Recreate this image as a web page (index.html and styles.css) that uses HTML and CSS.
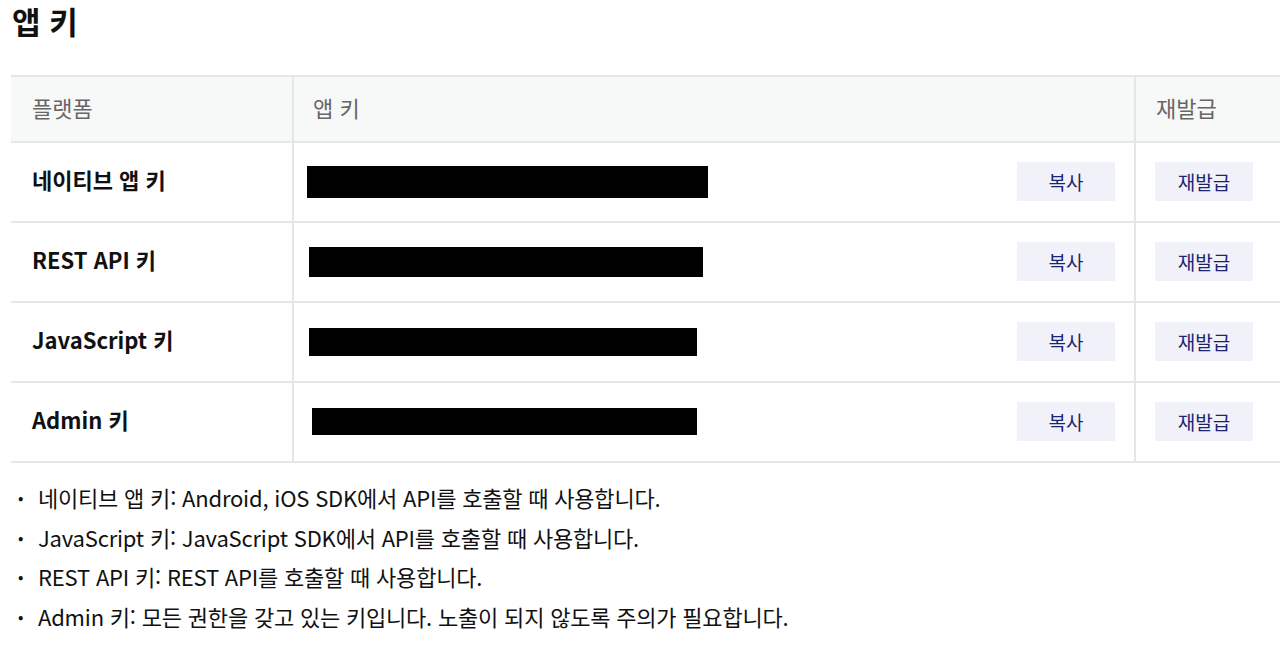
FILE: index.html
```html
<!DOCTYPE html>
<html lang="ko">
<head>
<meta charset="utf-8">
<title>앱 키</title>
<link rel="stylesheet" href="styles.css">
</head>
<body>
<div class="page">
  <h1 class="title">앱 키</h1>
  <table class="keys">
    <colgroup>
      <col class="w-platform">
      <col class="w-key">
      <col class="w-reissue">
    </colgroup>
    <thead>
      <tr>
        <th class="col-platform">플랫폼</th>
        <th class="col-key">앱 키</th>
        <th class="col-reissue">재발급</th>
      </tr>
    </thead>
    <tbody>
      <tr>
        <td class="label">네이티브 앱 키</td>
        <td class="keycell"><div class="keywrap"><span class="mask" style="width:401px;height:32px;margin-left:0"></span><button class="btn">복사</button></div></td>
        <td class="reissue"><button class="btn">재발급</button></td>
      </tr>
      <tr>
        <td class="label">REST API 키</td>
        <td class="keycell"><div class="keywrap"><span class="mask" style="width:394px;height:30px;margin-left:2px"></span><button class="btn">복사</button></div></td>
        <td class="reissue"><button class="btn">재발급</button></td>
      </tr>
      <tr>
        <td class="label">JavaScript 키</td>
        <td class="keycell"><div class="keywrap"><span class="mask" style="width:388px;height:28px;margin-left:2px"></span><button class="btn">복사</button></div></td>
        <td class="reissue"><button class="btn">재발급</button></td>
      </tr>
      <tr>
        <td class="label">Admin 키</td>
        <td class="keycell"><div class="keywrap"><span class="mask" style="width:385px;height:27px;margin-left:5px"></span><button class="btn">복사</button></div></td>
        <td class="reissue"><button class="btn">재발급</button></td>
      </tr>
    </tbody>
  </table>
  <ul class="notes">
    <li>네이티브 앱 키: Android, iOS SDK에서 API를 호출할 때 사용합니다.</li>
    <li>JavaScript 키: JavaScript SDK에서 API를 호출할 때 사용합니다.</li>
    <li>REST API 키: REST API를 호출할 때 사용합니다.</li>
    <li>Admin 키: 모든 권한을 갖고 있는 키입니다. 노출이 되지 않도록 주의가 필요합니다.</li>
  </ul>
</div>
</body>
</html>
```

FILE: styles.css
```css
html, body {
  margin: 0;
  padding: 0;
  background: #ffffff;
  overflow: hidden;
}
body {
  font-family: "Noto Sans CJK KR", "Noto Sans", sans-serif;
  color: #111111;
}
.page {
  padding: 0 0 0 11px;
}
.title {
  margin: 0;
  padding: 0 0 0 1px;
  font-size: 31px;
  font-weight: 700;
  line-height: 42px;
  height: 75px;
  color: #111111;
}
.keys {
  width: 1271px;
  border-collapse: collapse;
  table-layout: fixed;
}
.w-platform { width: 282px; }
.w-key { width: 842px; }
.keys th,
.keys td {
  border: 2px solid #e6e6e6;
  padding: 0;
}
.keys tr > :first-child { border-left: none; }
.keys tr > :last-child { border-right: none; }
.keys th {
  background: #f7f8f8;
  height: 66px;
  text-align: left;
  font-size: 22px;
  font-weight: 400;
  color: #666666;
  vertical-align: middle;
  padding-bottom: 5px;
  box-sizing: border-box;
}
.col-platform { padding-left: 21px !important; }
.col-key { padding-left: 19px !important; }
.col-reissue { padding-left: 20px !important; }
.keys td {
  height: 72px;
  vertical-align: middle;
}
.label {
  padding-left: 21px !important;
  padding-bottom: 6px !important;
  font-size: 22px;
  font-weight: 700;
  color: #111111;
}
.keycell {
  padding: 0 19px 1px 13px !important;
}
.keywrap {
  display: flex;
  align-items: center;
  justify-content: space-between;
}
.mask {
  display: block;
  background: #000000;
}
.reissue {
  padding-left: 19px !important;
  padding-bottom: 1px !important;
}
.btn {
  width: 98px;
  height: 39px;
  border: none;
  background: #f1f2f9;
  color: #1b2570;
  font-family: "Noto Sans CJK KR", "Noto Sans", sans-serif;
  font-size: 19px;
  padding: 0;
  cursor: pointer;
}
.notes {
  list-style: none;
  margin: 15px 0 0 0;
  padding: 0;
}
.notes li {
  position: relative;
  padding-left: 27px;
  font-size: 22px;
  line-height: 39.5px;
  color: #111111;
  letter-spacing: -0.2px;
}
.notes li::before {
  content: "•";
  position: absolute;
  left: 7px;
  top: 0;
  font-size: 16px;
}
```
